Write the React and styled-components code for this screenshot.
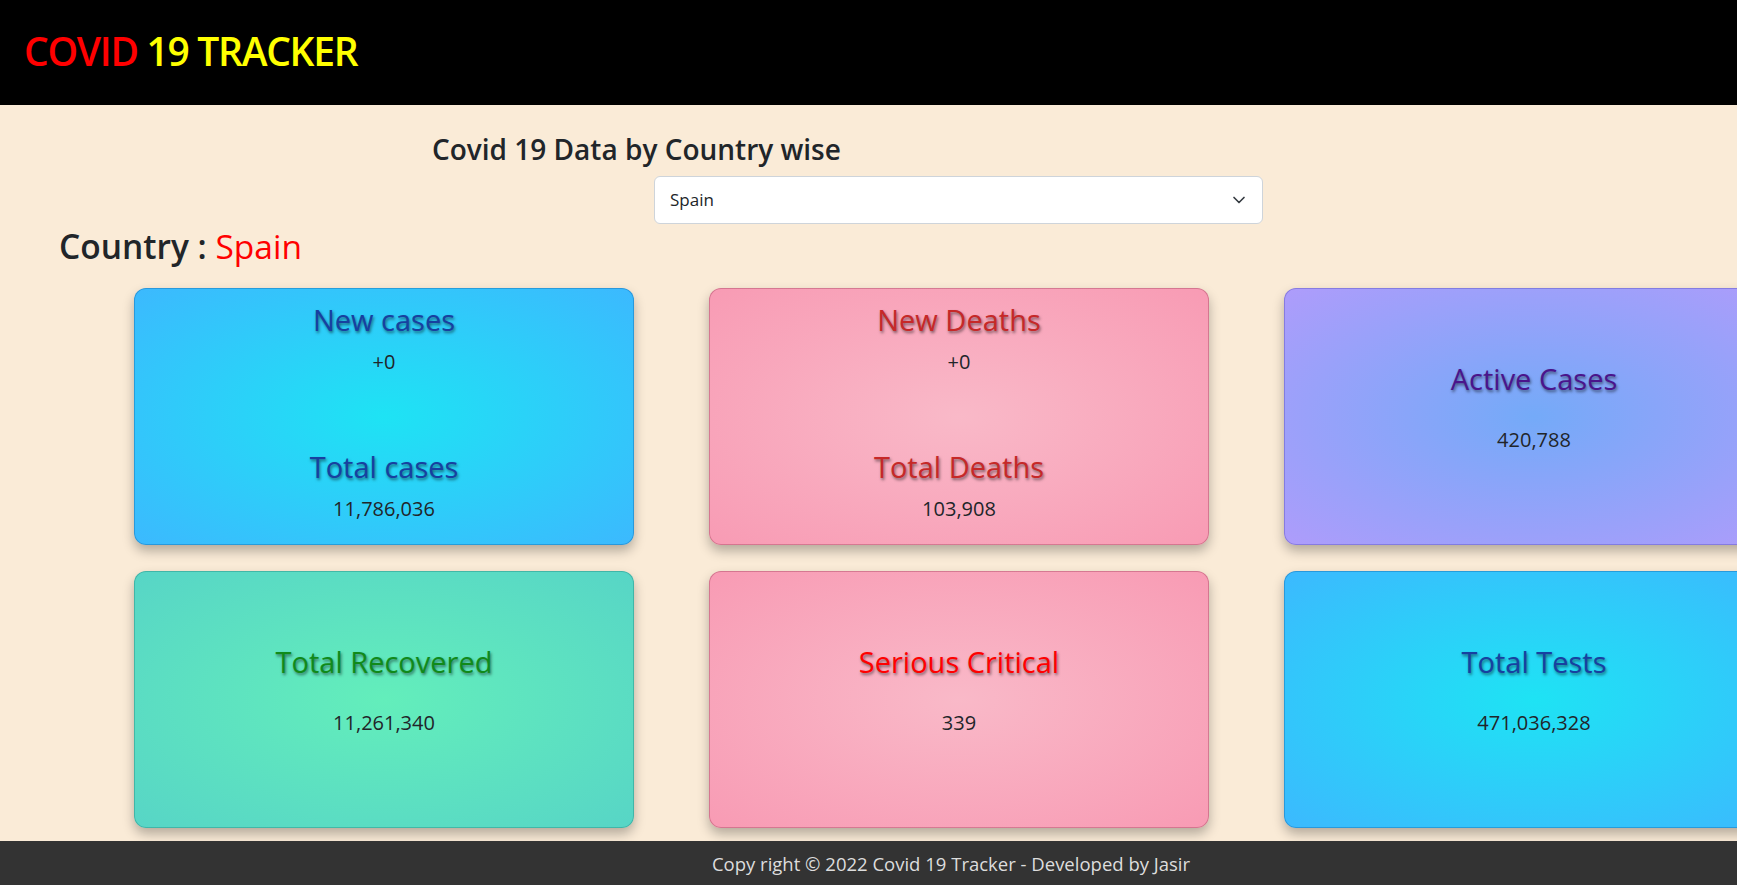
import React from "react";
import styled, { createGlobalStyle, css } from "styled-components";
import { ChevronDown } from "lucide-react";

const GlobalStyle = createGlobalStyle`
  html, body {
    margin: 0;
    padding: 0;
  }
  body {
    background: #faebd7;
    overflow: hidden;
    font-family: "Open Sans", "Noto Sans", "Liberation Sans", sans-serif;
    color: #212529;
  }
  * {
    box-sizing: border-box;
  }
`;

const themes = {
  blue: {
    bg: "radial-gradient(ellipse at center, #1ee3f4 0%, #3cb9fe 100%)",
    title: "#1740a0",
    border: "rgba(20, 110, 180, 0.45)",
  },
  pink: {
    bg: "radial-gradient(ellipse at center, #f9b9c8 0%, #f89bb4 100%)",
    title: "#c62828",
    border: "rgba(170, 70, 100, 0.45)",
  },
  red: {
    bg: "radial-gradient(ellipse at center, #f9b9c8 0%, #f89bb4 100%)",
    title: "#ff0000",
    border: "rgba(170, 70, 100, 0.45)",
  },
  purple: {
    bg: "radial-gradient(ellipse at center, #74aaf8 0%, #ae9cfb 100%)",
    title: "#4a148c",
    border: "rgba(100, 90, 200, 0.5)",
  },
  green: {
    bg: "radial-gradient(ellipse at center, #63eebb 0%, #57d5c6 100%)",
    title: "#108a1a",
    border: "rgba(40, 150, 140, 0.5)",
  },
};

const Page = styled.div`
  width: 1902px;
  min-height: 885px;
  display: flex;
  flex-direction: column;
`;

const Header = styled.header`
  height: 105px;
  background: #000;
  display: flex;
  align-items: center;
  padding: 0 0 4px 24px;
`;

const Logo = styled.h1`
  margin: 0;
  font-size: 39px;
  font-weight: 600;
  letter-spacing: -1.3px;
  color: #ffff00;

  span {
    color: #ff0000;
  }
`;

const Main = styled.main`
  flex: 1;
  display: flex;
  flex-direction: column;
`;

const Heading = styled.h3`
  margin: 28px 0 9px 432px;
  font-size: 28px;
  font-weight: 600;
  line-height: 1.2;
  color: #212529;
`;

const SelectWrap = styled.div`
  position: relative;
  width: 609px;
  margin-left: 654px;
`;

const Select = styled.select`
  appearance: none;
  width: 100%;
  height: 48px;
  padding: 0 40px 0 15px;
  border: 1px solid #ced4da;
  border-radius: 6px;
  background: #fff;
  font-family: inherit;
  font-size: 17px;
  color: #212529;
  outline: none;
`;

const Chevron = styled(ChevronDown)`
  position: absolute;
  right: 14px;
  top: 50%;
  transform: translateY(-50%);
  pointer-events: none;
  color: #343a40;
`;

const CountryTitle = styled.h2`
  margin: 2px 0 22px 59px;
  font-size: 33.5px;
  font-weight: 600;
  line-height: 1.2;
  color: #212529;

  span {
    color: #ff0000;
    font-weight: 500;
  }
`;

const Grid = styled.section`
  display: grid;
  grid-template-columns: repeat(3, 500px);
  grid-auto-rows: 257px;
  column-gap: 75px;
  row-gap: 26px;
  padding-left: 134px;
`;

const Card = styled.div`
  display: flex;
  flex-direction: column;
  align-items: center;
  border-radius: 12px;
  background: ${(p) => themes[p.$tone].bg};
  border: 1px solid ${(p) => themes[p.$tone].border};
  box-shadow: 0 6px 12px rgba(0, 0, 0, 0.28);
  color: ${(p) => themes[p.$tone].title};

  ${(p) =>
    p.$split
      ? css`
          justify-content: space-between;
          padding: 14px 0 23px;
        `
      : css`
          justify-content: center;
          padding: 14px 0 33px;
        `}
`;

const Stat = styled.div`
  display: flex;
  flex-direction: column;
  align-items: center;
  gap: ${(p) => p.$gap}px;
`;

const StatTitle = styled.h3`
  margin: 0;
  font-size: 29px;
  font-weight: 400;
  line-height: 34px;
  color: inherit;
  text-shadow: 1px 2px 3px rgba(0, 0, 0, 0.5);
`;

const StatValue = styled.h5`
  margin: 0;
  font-size: 20px;
  font-weight: 500;
  line-height: 24px;
  color: #212529;
`;

const Footer = styled.footer`
  height: 44px;
  margin-top: 13px;
  background: #333;
  display: flex;
  align-items: center;
  justify-content: center;
  color: #ddd;
  font-size: 18.5px;
`;

const cards = [
  {
    tone: "blue",
    stats: [
      { title: "New cases", value: "+0" },
      { title: "Total cases", value: "11,786,036" },
    ],
  },
  {
    tone: "pink",
    stats: [
      { title: "New Deaths", value: "+0" },
      { title: "Total Deaths", value: "103,908" },
    ],
  },
  { tone: "purple", stats: [{ title: "Active Cases", value: "420,788" }] },
  { tone: "green", stats: [{ title: "Total Recovered", value: "11,261,340" }] },
  { tone: "red", stats: [{ title: "Serious Critical", value: "339" }] },
  { tone: "blue", stats: [{ title: "Total Tests", value: "471,036,328" }] },
];

export default function App() {
  return (
    <>
      <GlobalStyle />
      <Page>
        <Header>
          <Logo>
            <span>COVID</span> 19 TRACKER
          </Logo>
        </Header>
        <Main>
          <Heading>Covid 19 Data by Country wise</Heading>
          <SelectWrap>
            <Select defaultValue="Spain">
              <option>India</option>
              <option>Spain</option>
              <option>USA</option>
            </Select>
            <Chevron size={20} strokeWidth={2} />
          </SelectWrap>
          <CountryTitle>
            Country : <span>Spain</span>
          </CountryTitle>
          <Grid>
            {cards.map((card, i) => {
              const split = card.stats.length > 1;
              return (
                <Card key={i} $tone={card.tone} $split={split}>
                  {card.stats.map((s) => (
                    <Stat key={s.title} $gap={split ? 13 : 32}>
                      <StatTitle>{s.title}</StatTitle>
                      <StatValue>{s.value}</StatValue>
                    </Stat>
                  ))}
                </Card>
              );
            })}
          </Grid>
        </Main>
        <Footer>Copy right © 2022 Covid 19 Tracker - Developed by Jasir</Footer>
      </Page>
    </>
  );
}
